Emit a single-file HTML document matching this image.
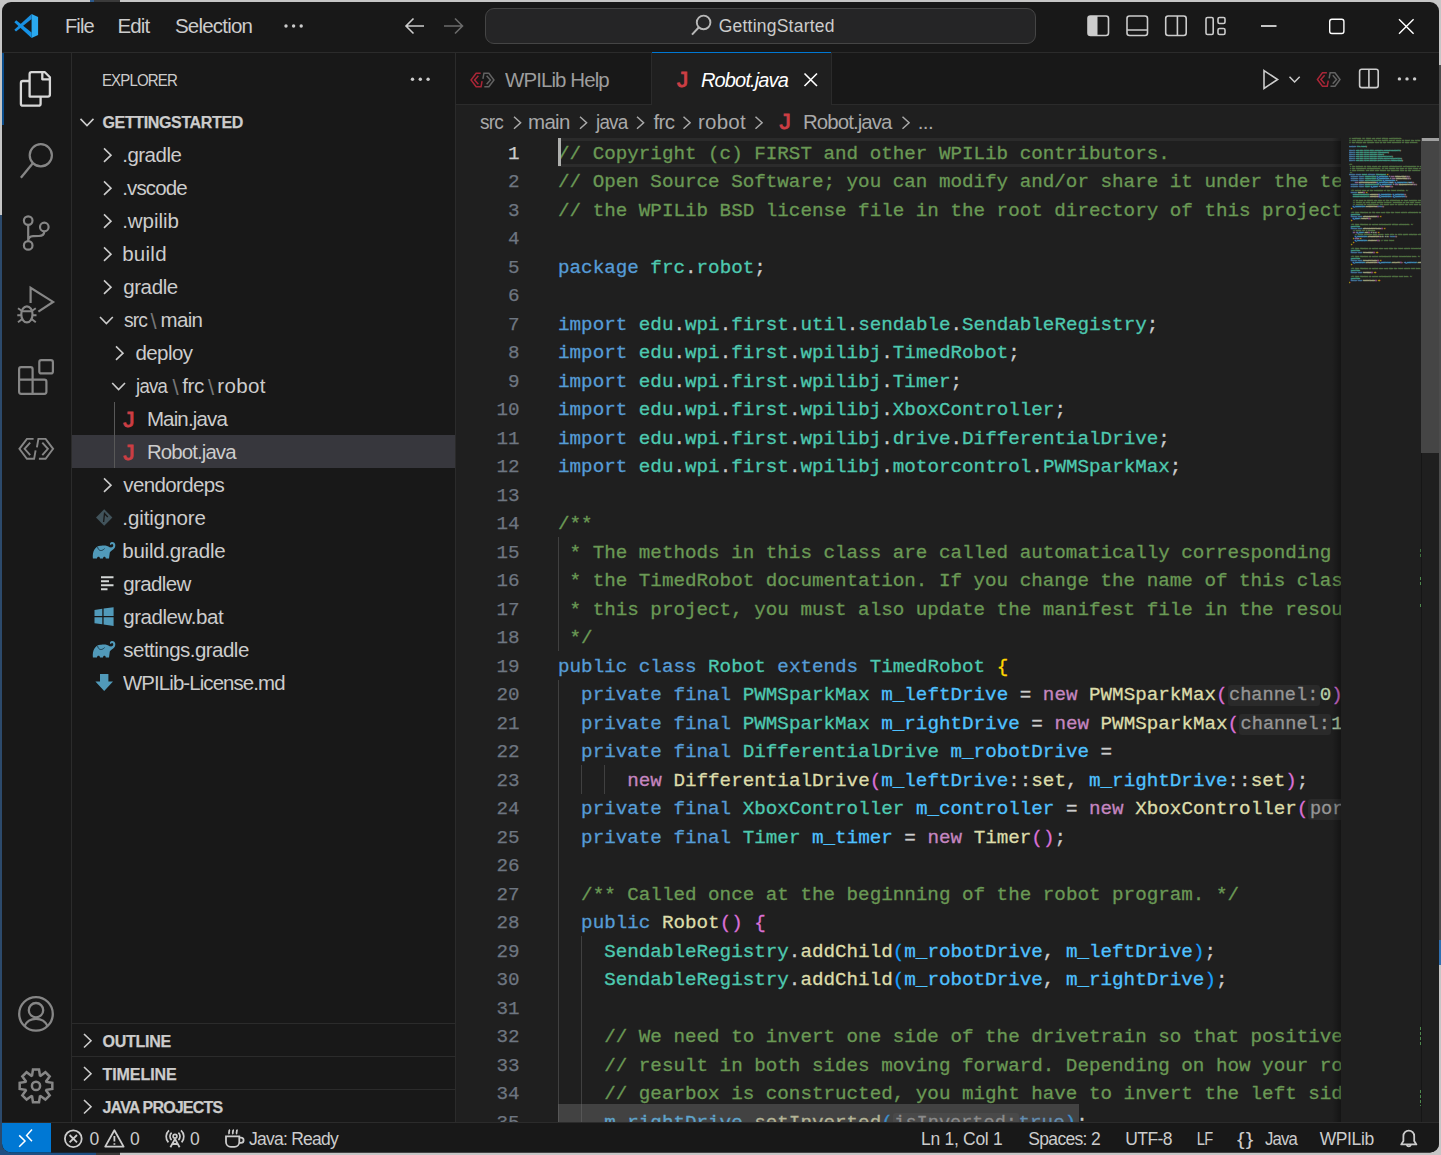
<!DOCTYPE html>
<html><head><meta charset="utf-8"><title>Robot.java - GettingStarted - Visual Studio Code</title>
<style>
html,body{margin:0;padding:0}
body{width:1441px;height:1155px;overflow:hidden;position:relative;background:#c6c6c6;font-family:"Liberation Sans",sans-serif}
#outside{position:absolute;left:0;top:0;width:1441px;height:1155px}
#win{position:absolute;left:0;top:0;width:1441px;height:1155px;background:#181818;clip-path:inset(2px 2px 2.5px 2px round 9px)}
.abs{position:absolute}
.t{position:absolute;white-space:pre}
.cl{position:absolute;left:558px;height:28.5px;line-height:28.5px;white-space:pre;font-family:"Liberation Mono",monospace;font-size:19.24px;color:#cccccc;-webkit-text-stroke:0.3px}
.ln{position:absolute;left:456px;width:63.5px;text-align:right;height:28.5px;line-height:28.5px;font-family:"Liberation Mono",monospace;font-size:19.24px;-webkit-text-stroke:0.25px}
.hint{font-size:18.6px;color:#969696;background:#2a2a2a;padding:0 1.5px;border-radius:3px}
#code{position:absolute;left:0;top:0;width:1341px;height:1122px;overflow:hidden}
svg{position:absolute;left:0;top:0}
#mm{position:absolute;left:0;top:0;width:1400px;transform-origin:0 0;transform:scale(0.0866,0.125);font-family:"Liberation Mono",monospace;font-size:19.24px;font-weight:700;color:#cccccc;opacity:0.7;-webkit-text-stroke:4px}
.ml{height:16px;line-height:16px;white-space:pre}
</style></head>
<body>
<div id="outside"><div class="abs" style="left:0px;top:0px;width:1441px;height:1155px;background:#c6c6c6;"></div><div class="abs" style="left:0px;top:215px;width:4px;height:940px;background:#2c4a6c;"></div><div class="abs" style="left:0px;top:1150px;width:96px;height:5px;background:#1f4f82;"></div><div class="abs" style="left:96px;top:1150px;width:24px;height:5px;background:#3a3a3a;"></div><div class="abs" style="left:90px;top:0px;width:4px;height:4px;background:#2c5a8c;"></div><div class="abs" style="left:94px;top:0px;width:26px;height:4px;background:#3a3a3a;"></div><div class="abs" style="left:1437px;top:65px;width:4px;height:875px;background:#4c4c4c;"></div><div class="abs" style="left:1437px;top:940px;width:4px;height:25px;background:#2f6fb0;"></div></div>
<div id="win">
<div class="abs" style="left:2px;top:52px;width:1437px;height:1px;background:#2b2b2b;"></div><div class="abs" style="left:485px;top:8px;width:549px;height:34px;box-sizing:content-box;border:1px solid #454545;border-radius:9px;background:#252526"></div><div class="abs" style="left:71px;top:53px;width:1px;height:1069px;background:#2b2b2b;"></div><div class="abs" style="left:2px;top:53px;width:1.5px;height:72px;background:#0c4e8c;"></div><div class="abs" style="left:455px;top:53px;width:1px;height:1069px;background:#2b2b2b;"></div><div class="abs" style="left:72px;top:435px;width:383px;height:33px;background:#37373d;"></div><div class="abs" style="left:72px;top:1023px;width:383px;height:1px;background:#2b2b2b;"></div><div class="abs" style="left:72px;top:1056px;width:383px;height:1px;background:#2b2b2b;"></div><div class="abs" style="left:72px;top:1089px;width:383px;height:1px;background:#2b2b2b;"></div><div class="abs" style="left:114px;top:402px;width:1px;height:66px;background:#585858;"></div><div class="abs" style="left:456px;top:53px;width:983px;height:1069px;background:#1f1f1f;"></div><div class="abs" style="left:456px;top:53px;width:983px;height:51px;background:#181818;"></div><div class="abs" style="left:456px;top:104px;width:983px;height:1px;background:#2b2b2b;"></div><div class="abs" style="left:651px;top:53px;width:1px;height:51px;background:#2b2b2b;"></div><div class="abs" style="left:652px;top:53px;width:179px;height:52px;background:#1f1f1f;"></div><div class="abs" style="left:652px;top:52px;width:179px;height:1.2px;background:#0078d4;"></div><div class="abs" style="left:831px;top:53px;width:1px;height:51px;background:#2b2b2b;"></div><div class="abs" style="left:558px;top:138px;width:783px;height:3px;background:#2b2b2b;"></div><div class="abs" style="left:558px;top:163.5px;width:783px;height:3px;background:#2b2b2b;"></div><div class="abs" style="left:2px;top:1122px;width:1437px;height:1px;background:#2b2b2b;"></div><div class="abs" style="left:2px;top:1123px;width:1437px;height:30px;background:#181818;"></div><div class="abs" style="left:2px;top:1123px;width:49px;height:30px;background:#0078d4;"></div>
<div id="code">
<div class="abs" style="left:558px;top:537.0px;width:1.2px;height:114.0px;background:#404040;"></div><div class="abs" style="left:558px;top:679.5px;width:1.2px;height:456.0px;background:#404040;"></div><div class="abs" style="left:581px;top:765.0px;width:1.2px;height:28.5px;background:#404040;"></div><div class="abs" style="left:604px;top:765.0px;width:1.2px;height:28.5px;background:#404040;"></div><div class="abs" style="left:581px;top:936.0px;width:1.2px;height:199.5px;background:#404040;"></div>
<div class="cl" style="top:139.5px"><span style="color:#6A9955">// Copyright (c) FIRST and other WPILib contributors.</span></div>
<div class="ln" style="top:139.5px;color:#cccccc">1</div>
<div class="cl" style="top:168.0px"><span style="color:#6A9955">// Open Source Software; you can modify and/or share it under the terms of</span></div>
<div class="ln" style="top:168.0px;color:#6e7681">2</div>
<div class="cl" style="top:196.5px"><span style="color:#6A9955">// the WPILib BSD license file in the root directory of this project.</span></div>
<div class="ln" style="top:196.5px;color:#6e7681">3</div>
<div class="cl" style="top:225.0px"></div>
<div class="ln" style="top:225.0px;color:#6e7681">4</div>
<div class="cl" style="top:253.5px"><span style="color:#569CD6">package</span> <span style="color:#4EC9B0">frc</span>.<span style="color:#4EC9B0">robot</span>;</div>
<div class="ln" style="top:253.5px;color:#6e7681">5</div>
<div class="cl" style="top:282.0px"></div>
<div class="ln" style="top:282.0px;color:#6e7681">6</div>
<div class="cl" style="top:310.5px"><span style="color:#569CD6">import</span> <span style="color:#4EC9B0">edu</span>.<span style="color:#4EC9B0">wpi</span>.<span style="color:#4EC9B0">first</span>.<span style="color:#4EC9B0">util</span>.<span style="color:#4EC9B0">sendable</span>.<span style="color:#4EC9B0">SendableRegistry</span>;</div>
<div class="ln" style="top:310.5px;color:#6e7681">7</div>
<div class="cl" style="top:339.0px"><span style="color:#569CD6">import</span> <span style="color:#4EC9B0">edu</span>.<span style="color:#4EC9B0">wpi</span>.<span style="color:#4EC9B0">first</span>.<span style="color:#4EC9B0">wpilibj</span>.<span style="color:#4EC9B0">TimedRobot</span>;</div>
<div class="ln" style="top:339.0px;color:#6e7681">8</div>
<div class="cl" style="top:367.5px"><span style="color:#569CD6">import</span> <span style="color:#4EC9B0">edu</span>.<span style="color:#4EC9B0">wpi</span>.<span style="color:#4EC9B0">first</span>.<span style="color:#4EC9B0">wpilibj</span>.<span style="color:#4EC9B0">Timer</span>;</div>
<div class="ln" style="top:367.5px;color:#6e7681">9</div>
<div class="cl" style="top:396.0px"><span style="color:#569CD6">import</span> <span style="color:#4EC9B0">edu</span>.<span style="color:#4EC9B0">wpi</span>.<span style="color:#4EC9B0">first</span>.<span style="color:#4EC9B0">wpilibj</span>.<span style="color:#4EC9B0">XboxController</span>;</div>
<div class="ln" style="top:396.0px;color:#6e7681">10</div>
<div class="cl" style="top:424.5px"><span style="color:#569CD6">import</span> <span style="color:#4EC9B0">edu</span>.<span style="color:#4EC9B0">wpi</span>.<span style="color:#4EC9B0">first</span>.<span style="color:#4EC9B0">wpilibj</span>.<span style="color:#4EC9B0">drive</span>.<span style="color:#4EC9B0">DifferentialDrive</span>;</div>
<div class="ln" style="top:424.5px;color:#6e7681">11</div>
<div class="cl" style="top:453.0px"><span style="color:#569CD6">import</span> <span style="color:#4EC9B0">edu</span>.<span style="color:#4EC9B0">wpi</span>.<span style="color:#4EC9B0">first</span>.<span style="color:#4EC9B0">wpilibj</span>.<span style="color:#4EC9B0">motorcontrol</span>.<span style="color:#4EC9B0">PWMSparkMax</span>;</div>
<div class="ln" style="top:453.0px;color:#6e7681">12</div>
<div class="cl" style="top:481.5px"></div>
<div class="ln" style="top:481.5px;color:#6e7681">13</div>
<div class="cl" style="top:510.0px"><span style="color:#6A9955">/**</span></div>
<div class="ln" style="top:510.0px;color:#6e7681">14</div>
<div class="cl" style="top:538.5px"><span style="color:#6A9955"> * The methods in this class are called automatically corresponding to each mode, as described in</span></div>
<div class="ln" style="top:538.5px;color:#6e7681">15</div>
<div class="cl" style="top:567.0px"><span style="color:#6A9955"> * the TimedRobot documentation. If you change the name of this class or the package after creating</span></div>
<div class="ln" style="top:567.0px;color:#6e7681">16</div>
<div class="cl" style="top:595.5px"><span style="color:#6A9955"> * this project, you must also update the manifest file in the resource directory.</span></div>
<div class="ln" style="top:595.5px;color:#6e7681">17</div>
<div class="cl" style="top:624.0px"><span style="color:#6A9955"> */</span></div>
<div class="ln" style="top:624.0px;color:#6e7681">18</div>
<div class="cl" style="top:652.5px"><span style="color:#569CD6">public</span> <span style="color:#569CD6">class</span> <span style="color:#4EC9B0">Robot</span> <span style="color:#569CD6">extends</span> <span style="color:#4EC9B0">TimedRobot</span> <span style="color:#FFD700">{</span></div>
<div class="ln" style="top:652.5px;color:#6e7681">19</div>
<div class="cl" style="top:681.0px">  <span style="color:#569CD6">private</span> <span style="color:#569CD6">final</span> <span style="color:#4EC9B0">PWMSparkMax</span> <span style="color:#4FC1FF">m_leftDrive</span> = <span style="color:#C586C0">new</span> <span style="color:#DCDCAA">PWMSparkMax</span><span style="color:#DA70D6">(</span><span class="hint">channel:</span><span style="color:#B5CEA8">0</span><span style="color:#DA70D6">)</span>;</div>
<div class="ln" style="top:681.0px;color:#6e7681">20</div>
<div class="cl" style="top:709.5px">  <span style="color:#569CD6">private</span> <span style="color:#569CD6">final</span> <span style="color:#4EC9B0">PWMSparkMax</span> <span style="color:#4FC1FF">m_rightDrive</span> = <span style="color:#C586C0">new</span> <span style="color:#DCDCAA">PWMSparkMax</span><span style="color:#DA70D6">(</span><span class="hint">channel:</span><span style="color:#B5CEA8">1</span><span style="color:#DA70D6">)</span>;</div>
<div class="ln" style="top:709.5px;color:#6e7681">21</div>
<div class="cl" style="top:738.0px">  <span style="color:#569CD6">private</span> <span style="color:#569CD6">final</span> <span style="color:#4EC9B0">DifferentialDrive</span> <span style="color:#4FC1FF">m_robotDrive</span> =</div>
<div class="ln" style="top:738.0px;color:#6e7681">22</div>
<div class="cl" style="top:766.5px">      <span style="color:#C586C0">new</span> <span style="color:#DCDCAA">DifferentialDrive</span><span style="color:#DA70D6">(</span><span style="color:#4FC1FF">m_leftDrive</span>::<span style="color:#DCDCAA">set</span>, <span style="color:#4FC1FF">m_rightDrive</span>::<span style="color:#DCDCAA">set</span><span style="color:#DA70D6">)</span>;</div>
<div class="ln" style="top:766.5px;color:#6e7681">23</div>
<div class="cl" style="top:795.0px">  <span style="color:#569CD6">private</span> <span style="color:#569CD6">final</span> <span style="color:#4EC9B0">XboxController</span> <span style="color:#4FC1FF">m_controller</span> = <span style="color:#C586C0">new</span> <span style="color:#DCDCAA">XboxController</span><span style="color:#DA70D6">(</span><span class="hint">port:</span><span style="color:#B5CEA8">0</span><span style="color:#DA70D6">)</span>;</div>
<div class="ln" style="top:795.0px;color:#6e7681">24</div>
<div class="cl" style="top:823.5px">  <span style="color:#569CD6">private</span> <span style="color:#569CD6">final</span> <span style="color:#4EC9B0">Timer</span> <span style="color:#4FC1FF">m_timer</span> = <span style="color:#C586C0">new</span> <span style="color:#DCDCAA">Timer</span><span style="color:#DA70D6">(</span><span style="color:#DA70D6">)</span>;</div>
<div class="ln" style="top:823.5px;color:#6e7681">25</div>
<div class="cl" style="top:852.0px"></div>
<div class="ln" style="top:852.0px;color:#6e7681">26</div>
<div class="cl" style="top:880.5px">  <span style="color:#6A9955">/** Called once at the beginning of the robot program. */</span></div>
<div class="ln" style="top:880.5px;color:#6e7681">27</div>
<div class="cl" style="top:909.0px">  <span style="color:#569CD6">public</span> <span style="color:#DCDCAA">Robot</span><span style="color:#DA70D6">()</span> <span style="color:#DA70D6">{</span></div>
<div class="ln" style="top:909.0px;color:#6e7681">28</div>
<div class="cl" style="top:937.5px">    <span style="color:#4EC9B0">SendableRegistry</span>.<span style="color:#DCDCAA">addChild</span><span style="color:#179FFF">(</span><span style="color:#4FC1FF">m_robotDrive</span>, <span style="color:#4FC1FF">m_leftDrive</span><span style="color:#179FFF">)</span>;</div>
<div class="ln" style="top:937.5px;color:#6e7681">29</div>
<div class="cl" style="top:966.0px">    <span style="color:#4EC9B0">SendableRegistry</span>.<span style="color:#DCDCAA">addChild</span><span style="color:#179FFF">(</span><span style="color:#4FC1FF">m_robotDrive</span>, <span style="color:#4FC1FF">m_rightDrive</span><span style="color:#179FFF">)</span>;</div>
<div class="ln" style="top:966.0px;color:#6e7681">30</div>
<div class="cl" style="top:994.5px"></div>
<div class="ln" style="top:994.5px;color:#6e7681">31</div>
<div class="cl" style="top:1023.0px">    <span style="color:#6A9955">// We need to invert one side of the drivetrain so that positive voltages</span></div>
<div class="ln" style="top:1023.0px;color:#6e7681">32</div>
<div class="cl" style="top:1051.5px">    <span style="color:#6A9955">// result in both sides moving forward. Depending on how your robot&#x27;s</span></div>
<div class="ln" style="top:1051.5px;color:#6e7681">33</div>
<div class="cl" style="top:1080.0px">    <span style="color:#6A9955">// gearbox is constructed, you might have to invert the left side instead.</span></div>
<div class="ln" style="top:1080.0px;color:#6e7681">34</div>
<div class="cl" style="top:1108.5px">    <span style="color:#4FC1FF">m_rightDrive</span>.<span style="color:#DCDCAA">setInverted</span><span style="color:#179FFF">(</span><span class="hint">isInverted:</span><span style="color:#569CD6">true</span><span style="color:#179FFF">)</span>;</div>
<div class="ln" style="top:1108.5px;color:#6e7681">35</div>
<div class="abs" style="left:558px;top:138px;width:3px;height:28px;background:#aeafad"></div>
<div class="abs" style="left:558px;top:1104px;width:521px;height:18px;background:rgba(121,121,121,0.4)"></div>
</div>
<!-- minimap + scrollbar -->
<div class="abs" style="left:1332px;top:138px;width:9px;height:984px;background:linear-gradient(to right,rgba(0,0,0,0),rgba(0,0,0,0.35))"></div>
<div class="abs" style="left:1341px;top:138px;width:98px;height:984px;background:#1f1f1f"></div>
<div class="abs" style="left:1421px;top:138px;width:1px;height:984px;background:#161616"></div>
<div class="abs" style="left:1421px;top:138px;width:18px;height:315px;background:#454545"></div>
<div class="abs" style="left:1422px;top:138px;width:17px;height:3px;background:#a0a0a0"></div>
<div class="abs" style="left:1420px;top:549px;width:1px;height:8px;background:repeating-linear-gradient(to bottom,#3f6f3f 0 3px,transparent 3px 5px)"></div><div class="abs" style="left:1420px;top:577px;width:1px;height:8px;background:repeating-linear-gradient(to bottom,#4f8a4f 0 3px,transparent 3px 5px)"></div><div class="abs" style="left:1420px;top:604px;width:1px;height:4px;background:repeating-linear-gradient(to bottom,#4f8a4f 0 3px,transparent 3px 5px)"></div><div class="abs" style="left:1420px;top:1027px;width:1px;height:20px;background:repeating-linear-gradient(to bottom,#4f8a4f 0 3px,transparent 3px 5px)"></div><div class="abs" style="left:1420px;top:1090px;width:1px;height:16px;background:repeating-linear-gradient(to bottom,#4f8a4f 0 3px,transparent 3px 5px)"></div>
<div class="abs" style="left:1349px;top:136.8px;width:72px;height:150px;overflow:hidden"><div id="mm">
<div class="ml"><span style="color:#6A9955">// Copyright (c) FIRST and other WPILib contributors.</span></div>
<div class="ml"><span style="color:#6A9955">// Open Source Software; you can modify and/or share it under the terms of</span></div>
<div class="ml"><span style="color:#6A9955">// the WPILib BSD license file in the root directory of this project.</span></div>
<div class="ml"> </div>
<div class="ml"><span style="color:#569CD6">package</span> <span style="color:#4EC9B0">frc</span>.<span style="color:#4EC9B0">robot</span>;</div>
<div class="ml"> </div>
<div class="ml"><span style="color:#569CD6">import</span> <span style="color:#4EC9B0">edu</span>.<span style="color:#4EC9B0">wpi</span>.<span style="color:#4EC9B0">first</span>.<span style="color:#4EC9B0">util</span>.<span style="color:#4EC9B0">sendable</span>.<span style="color:#4EC9B0">SendableRegistry</span>;</div>
<div class="ml"><span style="color:#569CD6">import</span> <span style="color:#4EC9B0">edu</span>.<span style="color:#4EC9B0">wpi</span>.<span style="color:#4EC9B0">first</span>.<span style="color:#4EC9B0">wpilibj</span>.<span style="color:#4EC9B0">TimedRobot</span>;</div>
<div class="ml"><span style="color:#569CD6">import</span> <span style="color:#4EC9B0">edu</span>.<span style="color:#4EC9B0">wpi</span>.<span style="color:#4EC9B0">first</span>.<span style="color:#4EC9B0">wpilibj</span>.<span style="color:#4EC9B0">Timer</span>;</div>
<div class="ml"><span style="color:#569CD6">import</span> <span style="color:#4EC9B0">edu</span>.<span style="color:#4EC9B0">wpi</span>.<span style="color:#4EC9B0">first</span>.<span style="color:#4EC9B0">wpilibj</span>.<span style="color:#4EC9B0">XboxController</span>;</div>
<div class="ml"><span style="color:#569CD6">import</span> <span style="color:#4EC9B0">edu</span>.<span style="color:#4EC9B0">wpi</span>.<span style="color:#4EC9B0">first</span>.<span style="color:#4EC9B0">wpilibj</span>.<span style="color:#4EC9B0">drive</span>.<span style="color:#4EC9B0">DifferentialDrive</span>;</div>
<div class="ml"><span style="color:#569CD6">import</span> <span style="color:#4EC9B0">edu</span>.<span style="color:#4EC9B0">wpi</span>.<span style="color:#4EC9B0">first</span>.<span style="color:#4EC9B0">wpilibj</span>.<span style="color:#4EC9B0">motorcontrol</span>.<span style="color:#4EC9B0">PWMSparkMax</span>;</div>
<div class="ml"> </div>
<div class="ml"><span style="color:#6A9955">/**</span></div>
<div class="ml"> <span style="color:#6A9955">* The methods in this class are called automatically corresponding to each mode, as described in</span></div>
<div class="ml"> <span style="color:#6A9955">* the TimedRobot documentation. If you change the name of this class or the package after creating</span></div>
<div class="ml"> <span style="color:#6A9955">* this project, you must also update the manifest file in the resource directory.</span></div>
<div class="ml"> <span style="color:#6A9955">*/</span></div>
<div class="ml"><span style="color:#569CD6">public</span> <span style="color:#569CD6">class</span> <span style="color:#4EC9B0">Robot</span> <span style="color:#569CD6">extends</span> <span style="color:#4EC9B0">TimedRobot</span> <span style="color:#FFD700">{</span></div>
<div class="ml">  <span style="color:#569CD6">private</span> <span style="color:#569CD6">final</span> <span style="color:#4EC9B0">PWMSparkMax</span> <span style="color:#4FC1FF">m_leftDrive</span> = <span style="color:#C586C0">new</span> <span style="color:#DCDCAA">PWMSparkMax</span><span style="color:#DA70D6">(</span><span style="color:#B5CEA8">0</span><span style="color:#DA70D6">)</span>;</div>
<div class="ml">  <span style="color:#569CD6">private</span> <span style="color:#569CD6">final</span> <span style="color:#4EC9B0">PWMSparkMax</span> <span style="color:#4FC1FF">m_rightDrive</span> = <span style="color:#C586C0">new</span> <span style="color:#DCDCAA">PWMSparkMax</span><span style="color:#DA70D6">(</span><span style="color:#B5CEA8">1</span><span style="color:#DA70D6">)</span>;</div>
<div class="ml">  <span style="color:#569CD6">private</span> <span style="color:#569CD6">final</span> <span style="color:#4EC9B0">DifferentialDrive</span> <span style="color:#4FC1FF">m_robotDrive</span> =</div>
<div class="ml">      <span style="color:#C586C0">new</span> <span style="color:#DCDCAA">DifferentialDrive</span><span style="color:#DA70D6">(</span><span style="color:#4FC1FF">m_leftDrive</span>::<span style="color:#9CDCFE">set</span>, <span style="color:#4FC1FF">m_rightDrive</span>::<span style="color:#9CDCFE">set</span><span style="color:#DA70D6">)</span>;</div>
<div class="ml">  <span style="color:#569CD6">private</span> <span style="color:#569CD6">final</span> <span style="color:#4EC9B0">XboxController</span> <span style="color:#4FC1FF">m_controller</span> = <span style="color:#C586C0">new</span> <span style="color:#DCDCAA">XboxController</span><span style="color:#DA70D6">(</span><span style="color:#B5CEA8">0</span><span style="color:#DA70D6">)</span>;</div>
<div class="ml">  <span style="color:#569CD6">private</span> <span style="color:#569CD6">final</span> <span style="color:#4EC9B0">Timer</span> <span style="color:#4FC1FF">m_timer</span> = <span style="color:#C586C0">new</span> <span style="color:#DCDCAA">Timer</span><span style="color:#DA70D6">(</span><span style="color:#DA70D6">)</span>;</div>
<div class="ml"> </div>
<div class="ml">  <span style="color:#6A9955">/** Called once at the beginning of the robot program. */</span></div>
<div class="ml">  <span style="color:#569CD6">public</span> <span style="color:#DCDCAA">Robot</span><span style="color:#DA70D6">(</span><span style="color:#DA70D6">)</span> <span style="color:#FFD700">{</span></div>
<div class="ml">    <span style="color:#4EC9B0">SendableRegistry</span>.<span style="color:#DCDCAA">addChild</span><span style="color:#DA70D6">(</span><span style="color:#4FC1FF">m_robotDrive</span>, <span style="color:#4FC1FF">m_leftDrive</span><span style="color:#DA70D6">)</span>;</div>
<div class="ml">    <span style="color:#4EC9B0">SendableRegistry</span>.<span style="color:#DCDCAA">addChild</span><span style="color:#DA70D6">(</span><span style="color:#4FC1FF">m_robotDrive</span>, <span style="color:#4FC1FF">m_rightDrive</span><span style="color:#DA70D6">)</span>;</div>
<div class="ml"> </div>
<div class="ml">    <span style="color:#6A9955">// We need to invert one side of the drivetrain so that positive voltages</span></div>
<div class="ml">    <span style="color:#6A9955">// result in both sides moving forward. Depending on how your robot&#x27;s</span></div>
<div class="ml">    <span style="color:#6A9955">// gearbox is constructed, you might have to invert the left side instead.</span></div>
<div class="ml">    <span style="color:#4FC1FF">m_rightDrive</span>.<span style="color:#DCDCAA">setInverted</span><span style="color:#DA70D6">(</span><span style="color:#569CD6">true</span><span style="color:#DA70D6">)</span>;</div>
<div class="ml">  <span style="color:#FFD700">}</span></div>
<div class="ml"> </div>
<div class="ml">  <span style="color:#6A9955">/** This function is run once each time the robot enters autonomous mode. */</span></div>
<div class="ml">  <span style="color:#4EC9B0">@Override</span></div>
<div class="ml">  <span style="color:#569CD6">public</span> <span style="color:#569CD6">void</span> <span style="color:#DCDCAA">autonomousInit</span><span style="color:#DA70D6">(</span><span style="color:#DA70D6">)</span> <span style="color:#FFD700">{</span></div>
<div class="ml">    <span style="color:#4FC1FF">m_timer</span>.<span style="color:#DCDCAA">restart</span><span style="color:#DA70D6">(</span><span style="color:#DA70D6">)</span>;</div>
<div class="ml">  <span style="color:#FFD700">}</span></div>
<div class="ml"> </div>
<div class="ml">  <span style="color:#6A9955">/** This function is called periodically during autonomous. */</span></div>
<div class="ml">  <span style="color:#4EC9B0">@Override</span></div>
<div class="ml">  <span style="color:#569CD6">public</span> <span style="color:#569CD6">void</span> <span style="color:#DCDCAA">autonomousPeriodic</span><span style="color:#DA70D6">(</span><span style="color:#DA70D6">)</span> <span style="color:#FFD700">{</span></div>
<div class="ml">    <span style="color:#6A9955">// Drive for 2 seconds</span></div>
<div class="ml">    <span style="color:#C586C0">if</span> <span style="color:#DA70D6">(</span><span style="color:#4FC1FF">m_timer</span>.<span style="color:#DCDCAA">get</span><span style="color:#DA70D6">(</span><span style="color:#DA70D6">)</span> &lt; <span style="color:#B5CEA8">2.0</span><span style="color:#DA70D6">)</span> <span style="color:#FFD700">{</span></div>
<div class="ml">      <span style="color:#6A9955">// Drive forwards half speed, make sure to turn input squaring off</span></div>
<div class="ml">      <span style="color:#4FC1FF">m_robotDrive</span>.<span style="color:#DCDCAA">arcadeDrive</span><span style="color:#DA70D6">(</span><span style="color:#B5CEA8">0.5</span>, <span style="color:#B5CEA8">0.0</span>, <span style="color:#569CD6">false</span><span style="color:#DA70D6">)</span>;</div>
<div class="ml">    <span style="color:#FFD700">}</span> <span style="color:#C586C0">else</span> <span style="color:#FFD700">{</span></div>
<div class="ml">      <span style="color:#4FC1FF">m_robotDrive</span>.<span style="color:#DCDCAA">stopMotor</span><span style="color:#DA70D6">(</span><span style="color:#DA70D6">)</span>; <span style="color:#6A9955">// stop robot</span></div>
<div class="ml">    <span style="color:#FFD700">}</span></div>
<div class="ml">  <span style="color:#FFD700">}</span></div>
<div class="ml"> </div>
<div class="ml">  <span style="color:#6A9955">/** This function is called once each time the robot enters teleoperated mode. */</span></div>
<div class="ml">  <span style="color:#4EC9B0">@Override</span></div>
<div class="ml">  <span style="color:#569CD6">public</span> <span style="color:#569CD6">void</span> <span style="color:#DCDCAA">teleopInit</span><span style="color:#DA70D6">(</span><span style="color:#DA70D6">)</span> <span style="color:#FFD700">{</span><span style="color:#FFD700">}</span></div>
<div class="ml"> </div>
<div class="ml">  <span style="color:#6A9955">/** This function is called periodically during teleoperated mode. */</span></div>
<div class="ml">  <span style="color:#4EC9B0">@Override</span></div>
<div class="ml">  <span style="color:#569CD6">public</span> <span style="color:#569CD6">void</span> <span style="color:#DCDCAA">teleopPeriodic</span><span style="color:#DA70D6">(</span><span style="color:#DA70D6">)</span> <span style="color:#FFD700">{</span></div>
<div class="ml">    <span style="color:#4FC1FF">m_robotDrive</span>.<span style="color:#DCDCAA">arcadeDrive</span><span style="color:#DA70D6">(</span>-<span style="color:#4FC1FF">m_controller</span>.<span style="color:#DCDCAA">getLeftY</span><span style="color:#DA70D6">(</span><span style="color:#DA70D6">)</span>, -<span style="color:#4FC1FF">m_controller</span>.<span style="color:#DCDCAA">getRightX</span><span style="color:#DA70D6">(</span><span style="color:#DA70D6">)</span><span style="color:#DA70D6">)</span>;</div>
<div class="ml">  <span style="color:#FFD700">}</span></div>
<div class="ml"> </div>
<div class="ml">  <span style="color:#6A9955">/** This function is called once each time the robot enters test mode. */</span></div>
<div class="ml">  <span style="color:#4EC9B0">@Override</span></div>
<div class="ml">  <span style="color:#569CD6">public</span> <span style="color:#569CD6">void</span> <span style="color:#DCDCAA">testInit</span><span style="color:#DA70D6">(</span><span style="color:#DA70D6">)</span> <span style="color:#FFD700">{</span><span style="color:#FFD700">}</span></div>
<div class="ml"> </div>
<div class="ml">  <span style="color:#6A9955">/** This function is called periodically during test mode. */</span></div>
<div class="ml">  <span style="color:#4EC9B0">@Override</span></div>
<div class="ml">  <span style="color:#569CD6">public</span> <span style="color:#569CD6">void</span> <span style="color:#DCDCAA">testPeriodic</span><span style="color:#DA70D6">(</span><span style="color:#DA70D6">)</span> <span style="color:#FFD700">{</span><span style="color:#FFD700">}</span></div>
<div class="ml"><span style="color:#FFD700">}</span></div>
</div></div>
<span class="t" style="left:64.50px;top:12.77px;font-size:20.5px;line-height:26.65px;color:#cccccc;letter-spacing:-0.900px;transform:scaleX(0.9782);transform-origin:-1.00px 50%;">File</span>
<span class="t" style="left:117.50px;top:12.77px;font-size:20.5px;line-height:26.65px;color:#cccccc;letter-spacing:-0.876px;">Edit</span>
<span class="t" style="left:175.00px;top:12.77px;font-size:20.5px;line-height:26.65px;color:#cccccc;letter-spacing:-0.804px;">Selection</span>
<span class="t" style="left:718.75px;top:14.56px;font-size:17.5px;line-height:22.75px;color:#cccccc;letter-spacing:0.222px;">GettingStarted</span>
<span class="t" style="left:101.50px;top:70.81px;font-size:16px;line-height:20.8px;color:#cccccc;letter-spacing:-0.900px;transform:scaleX(0.9396);transform-origin:-1.00px 50%;">EXPLORER</span>
<span class="t" style="left:102.50px;top:113.06px;font-size:16px;line-height:20.8px;color:#cccccc;letter-spacing:-0.363px;font-weight:700;-webkit-text-stroke:0.25px;">GETTINGSTARTED</span>
<span class="t" style="left:122.20px;top:141.57px;font-size:20.5px;line-height:26.65px;color:#cccccc;letter-spacing:-0.497px;">.gradle</span>
<span class="t" style="left:122.20px;top:174.57px;font-size:20.5px;line-height:26.65px;color:#cccccc;letter-spacing:-0.875px;">.vscode</span>
<span class="t" style="left:122.20px;top:207.57px;font-size:20.5px;line-height:26.65px;color:#cccccc;letter-spacing:-0.061px;">.wpilib</span>
<span class="t" style="left:122.20px;top:240.57px;font-size:20.5px;line-height:26.65px;color:#cccccc;letter-spacing:0.272px;">build</span>
<span class="t" style="left:123.20px;top:273.57px;font-size:20.5px;line-height:26.65px;color:#cccccc;letter-spacing:-0.397px;">gradle</span>
<span class="t" style="left:135.40px;top:339.57px;font-size:20.5px;line-height:26.65px;color:#cccccc;letter-spacing:-0.552px;">deploy</span>
<span class="t" style="left:146.90px;top:405.57px;font-size:20.5px;line-height:26.65px;color:#cccccc;letter-spacing:-0.854px;">Main.java</span>
<span class="t" style="left:146.90px;top:438.57px;font-size:20.5px;line-height:26.65px;color:#cccccc;letter-spacing:-0.900px;transform:scaleX(0.9955);transform-origin:-1.00px 50%;">Robot.java</span>
<span class="t" style="left:123.30px;top:471.57px;font-size:20.5px;line-height:26.65px;color:#cccccc;letter-spacing:-0.632px;">vendordeps</span>
<span class="t" style="left:122.30px;top:504.57px;font-size:20.5px;line-height:26.65px;color:#cccccc;letter-spacing:-0.070px;">.gitignore</span>
<span class="t" style="left:122.30px;top:537.57px;font-size:20.5px;line-height:26.65px;color:#cccccc;letter-spacing:-0.245px;">build.gradle</span>
<span class="t" style="left:123.30px;top:570.57px;font-size:20.5px;line-height:26.65px;color:#cccccc;letter-spacing:-0.631px;">gradlew</span>
<span class="t" style="left:123.30px;top:603.57px;font-size:20.5px;line-height:26.65px;color:#cccccc;letter-spacing:-0.456px;">gradlew.bat</span>
<span class="t" style="left:123.30px;top:636.57px;font-size:20.5px;line-height:26.65px;color:#cccccc;letter-spacing:-0.523px;">settings.gradle</span>
<span class="t" style="left:123.30px;top:669.57px;font-size:20.5px;line-height:26.65px;color:#cccccc;letter-spacing:-0.900px;transform:scaleX(0.9949);transform-origin:0.00px 50%;">WPILib-License.md</span>
<span class="t" style="left:123.50px;top:306.57px;font-size:20.5px;line-height:26.65px;color:#cccccc;letter-spacing:-0.900px;transform:scaleX(0.9396);transform-origin:0.00px 50%;">src</span>
<span class="t" style="left:150.60px;top:307.58px;font-size:22px;line-height:28.6px;color:#767676;">\</span>
<span class="t" style="left:160.60px;top:306.57px;font-size:20.5px;line-height:26.65px;color:#cccccc;letter-spacing:-0.711px;">main</span>
<span class="t" style="left:136.40px;top:372.57px;font-size:20.5px;line-height:26.65px;color:#cccccc;letter-spacing:-0.900px;transform:scaleX(0.9067);transform-origin:1.00px 50%;">java</span>
<span class="t" style="left:172.50px;top:373.58px;font-size:22px;line-height:28.6px;color:#767676;">\</span>
<span class="t" style="left:182.25px;top:372.57px;font-size:20.5px;line-height:26.65px;color:#cccccc;letter-spacing:-0.336px;">frc</span>
<span class="t" style="left:207.90px;top:373.58px;font-size:22px;line-height:28.6px;color:#767676;">\</span>
<span class="t" style="left:217.25px;top:372.57px;font-size:20.5px;line-height:26.65px;color:#cccccc;letter-spacing:0.367px;">robot</span>
<span class="t" style="left:102.50px;top:1031.81px;font-size:16px;line-height:20.8px;color:#cccccc;letter-spacing:-0.258px;font-weight:700;-webkit-text-stroke:0.25px;">OUTLINE</span>
<span class="t" style="left:102.50px;top:1064.56px;font-size:16px;line-height:20.8px;color:#cccccc;letter-spacing:-0.070px;font-weight:700;-webkit-text-stroke:0.25px;">TIMELINE</span>
<span class="t" style="left:102.50px;top:1097.56px;font-size:16px;line-height:20.8px;color:#cccccc;letter-spacing:-0.818px;font-weight:700;-webkit-text-stroke:0.25px;">JAVA PROJECTS</span>
<span class="t" style="left:504.75px;top:67.17px;font-size:20.5px;line-height:26.65px;color:#9d9d9d;letter-spacing:-0.900px;transform:scaleX(0.9973);transform-origin:0.00px 50%;">WPILib Help</span>
<span class="t" style="left:701.00px;top:67.17px;font-size:20.5px;line-height:26.65px;color:#ffffff;letter-spacing:-0.900px;transform:scaleX(0.9776);transform-origin:0.00px 50%;font-style:italic;">Robot.java</span>
<span class="t" style="left:480.00px;top:108.82px;font-size:20.5px;line-height:26.65px;color:#a9a9a9;letter-spacing:-0.900px;transform:scaleX(0.9297);transform-origin:0.00px 50%;">src</span>
<span class="t" style="left:528.00px;top:108.82px;font-size:20.5px;line-height:26.65px;color:#a9a9a9;letter-spacing:-0.677px;">main</span>
<span class="t" style="left:596.00px;top:108.82px;font-size:20.5px;line-height:26.65px;color:#a9a9a9;letter-spacing:-0.900px;transform:scaleX(0.9177);transform-origin:1.00px 50%;">java</span>
<span class="t" style="left:653.50px;top:108.82px;font-size:20.5px;line-height:26.65px;color:#a9a9a9;letter-spacing:-0.636px;">frc</span>
<span class="t" style="left:698.00px;top:108.82px;font-size:20.5px;line-height:26.65px;color:#a9a9a9;letter-spacing:0.242px;">robot</span>
<span class="t" style="left:803.00px;top:108.82px;font-size:20.5px;line-height:26.65px;color:#a9a9a9;letter-spacing:-0.900px;transform:scaleX(0.9944);transform-origin:-1.00px 50%;">Robot.java</span>
<span class="t" style="left:917.75px;top:108.82px;font-size:20.5px;line-height:26.65px;color:#a9a9a9;letter-spacing:-0.571px;">...</span>
<span class="t" style="left:123.30px;top:404.58px;font-size:22.5px;line-height:29.25px;color:#cc3e44;-webkit-text-stroke:0.9px;">J</span>
<span class="t" style="left:123.30px;top:437.58px;font-size:22.5px;line-height:29.25px;color:#cc3e44;-webkit-text-stroke:0.9px;">J</span>
<span class="t" style="left:676.90px;top:64.88px;font-size:22.5px;line-height:29.25px;color:#cc3e44;-webkit-text-stroke:0.9px;">J</span>
<span class="t" style="left:779.50px;top:107.48px;font-size:22.5px;line-height:29.25px;color:#cc3e44;-webkit-text-stroke:0.9px;">J</span>
<span class="t" style="left:89.50px;top:1127.56px;font-size:17.5px;line-height:22.75px;color:#cccccc;">0</span>
<span class="t" style="left:130.00px;top:1127.56px;font-size:17.5px;line-height:22.75px;color:#cccccc;">0</span>
<span class="t" style="left:190.00px;top:1127.56px;font-size:17.5px;line-height:22.75px;color:#cccccc;">0</span>
<span class="t" style="left:249.00px;top:1127.56px;font-size:17.5px;line-height:22.75px;color:#cccccc;letter-spacing:-0.753px;">Java: Ready</span>
<span class="t" style="left:921.00px;top:1127.56px;font-size:17.5px;line-height:22.75px;color:#cccccc;letter-spacing:-0.290px;">Ln 1, Col 1</span>
<span class="t" style="left:1028.25px;top:1127.56px;font-size:17.5px;line-height:22.75px;color:#cccccc;letter-spacing:-0.668px;">Spaces: 2</span>
<span class="t" style="left:1125.25px;top:1127.56px;font-size:17.5px;line-height:22.75px;color:#cccccc;letter-spacing:-0.586px;">UTF-8</span>
<span class="t" style="left:1197.00px;top:1127.56px;font-size:17.5px;line-height:22.75px;color:#cccccc;letter-spacing:-0.900px;transform:scaleX(0.8412);transform-origin:-1.00px 50%;">LF</span>
<span class="t" style="left:1237.00px;top:1127.56px;font-size:17.5px;line-height:22.75px;color:#cccccc;letter-spacing:0.900px;transform:scaleX(1.2947);transform-origin:0.00px 50%;">{}</span>
<span class="t" style="left:1264.50px;top:1127.56px;font-size:17.5px;line-height:22.75px;color:#cccccc;letter-spacing:-0.900px;transform:scaleX(0.9556);transform-origin:0.00px 50%;">Java</span>
<span class="t" style="left:1319.70px;top:1127.56px;font-size:17.5px;line-height:22.75px;color:#cccccc;letter-spacing:-0.394px;">WPILib</span>
<svg width="1441" height="1155" viewBox="0 0 1441 1155">
<polygon points="31.6,13.9 38.1,17 38.1,35 31.6,38.1" fill="#2aa9ef"/>
<polygon points="14.3,29.8 16.0,31.6 31.6,19.0 31.6,13.9" fill="#1a8fe0"/>
<polygon points="14.3,22.3 16.2,20.3 31.6,32.4 31.6,38.1" fill="#1592e6"/>
<circle cx="286" cy="26" r="1.7" fill="#cccccc"/><circle cx="293.6" cy="26" r="1.7" fill="#cccccc"/><circle cx="301.2" cy="26" r="1.7" fill="#cccccc"/>
<path d="M406 26 H424 M413.5 18.5 L406 26 L413.5 33.5" stroke="#cccccc" stroke-width="1.6" fill="none" />
<path d="M444 26 H462.5 M455 18.5 L462.5 26 L455 33.5" stroke="#6b6b6b" stroke-width="1.6" fill="none" />
<circle cx="703.6" cy="22.4" r="6.8" stroke="#b8b8b8" stroke-width="1.9" fill="none"/>
<path d="M698.9 27.3 L692 34.6" stroke="#b8b8b8" stroke-width="2.0" fill="none" />
<rect x="1088" y="16" width="20.5" height="19.5" rx="2.5" stroke="#cccccc" stroke-width="1.6" fill="none"/>
<path d="M1090.5 16 H1097.5 V35.5 H1090.5 A2.5 2.5 0 0 1 1088 33 V18.5 A2.5 2.5 0 0 1 1090.5 16Z" fill="#cccccc"/>
<rect x="1127" y="16" width="20.5" height="19.5" rx="2.5" stroke="#cccccc" stroke-width="1.6" fill="none"/>
<path d="M1127 30 H1147.5" stroke="#cccccc" stroke-width="1.6" fill="none" />
<rect x="1165.7" y="16" width="20.5" height="19.5" rx="2.5" stroke="#cccccc" stroke-width="1.6" fill="none"/>
<path d="M1177.4 16 V35.5" stroke="#cccccc" stroke-width="1.6" fill="none" />
<rect x="1206" y="17.5" width="7.2" height="17" rx="1.5" stroke="#cccccc" stroke-width="1.6" fill="none"/>
<rect x="1218" y="17.5" width="7" height="6" rx="1.5" stroke="#cccccc" stroke-width="1.6" fill="none"/>
<rect x="1218" y="28.5" width="7" height="6" rx="1.5" stroke="#cccccc" stroke-width="1.6" fill="none"/>
<path d="M1261 26 H1276.5" stroke="#ffffff" stroke-width="1.4" fill="none" />
<rect x="1329.7" y="19.3" width="14.2" height="14.2" rx="2.2" stroke="#ffffff" stroke-width="1.4" fill="none"/>
<path d="M1399 19.2 L1413.6 33.8 M1413.6 19.2 L1399 33.8" stroke="#ffffff" stroke-width="1.4" fill="none" />
<path d="M29.6 96.6 V74.2 A2 2 0 0 1 31.6 72.2 H44.9 L49.9 77.2 V94.6 A2 2 0 0 1 47.9 96.6 Z M42.3 72.2 V79.3 H49.9" stroke="#d7d7d7" stroke-width="2.3" fill="none" stroke-linejoin="round"/>
<path d="M29.6 81 H22.9 A2 2 0 0 0 20.9 83 V103.7 A2 2 0 0 0 22.9 105.7 H38.6 A2 2 0 0 0 40.6 103.7 V96.6" stroke="#d7d7d7" stroke-width="2.3" fill="none" />
<circle cx="40.8" cy="155.3" r="11.1" stroke="#868686" stroke-width="2.2" fill="none"/>
<path d="M32.6 163.6 L20.9 177.8" stroke="#868686" stroke-width="2.3" fill="none" />
<circle cx="28.2" cy="220.6" r="4.3" stroke="#868686" stroke-width="2.2" fill="none"/>
<circle cx="28.2" cy="245.4" r="4.3" stroke="#868686" stroke-width="2.2" fill="none"/>
<circle cx="44.3" cy="227" r="4.3" stroke="#868686" stroke-width="2.2" fill="none"/>
<path d="M28.2 225 V241 M28.2 240.5 C28.4 237.5 30 236.2 33 236.1 L39 236 C42.5 236 44.2 234.5 44.3 231.4" stroke="#868686" stroke-width="2.2" fill="none" />
<path d="M30.6 303 V287.8 L53.1 301.9 L38.4 311.6" stroke="#868686" stroke-width="2.2" fill="none" stroke-linejoin="miter"/>
<ellipse cx="26.9" cy="314.4" rx="5.6" ry="8" stroke="#868686" stroke-width="2.2" fill="none"/>
<path d="M21.5 311.2 H32.3 M18 308.2 L22 311 M35.8 308.2 L31.8 311 M17.3 315.2 H21.3 M36.5 315.2 H32.5 M18 322.2 L22.2 319 M35.8 322.2 L31.6 319" stroke="#868686" stroke-width="2.0" fill="none" />
<path d="M19.1 369.2 A2 2 0 0 1 21.1 367.2 H30.6 A2 2 0 0 1 32.6 369.2 V379.7 H44.4 A2 2 0 0 1 46.4 381.7 V391.8 A2 2 0 0 1 44.4 393.8 H21.1 A2 2 0 0 1 19.1 391.8 Z M19.1 379.7 H32.6 V393.8" stroke="#868686" stroke-width="2.2" fill="none" />
<rect x="39.3" y="360.2" width="13.6" height="13.2" rx="2" stroke="#868686" stroke-width="2.2" fill="none"/>
<path d="M33.60 438.90 L26.90 438.90 L19.40 448.85 L26.90 458.80 L34.10 458.80 L35.60 450.40" stroke="#868686" stroke-width="1.9" fill="none" /><path d="M30.20 442.60 L24.60 448.85 L30.20 455.20" stroke="#868686" stroke-width="1.9" fill="none" /><path d="M38.90 458.80 L45.60 458.80 L53.10 448.85 L45.60 438.90 L38.40 438.90 L36.90 447.30" stroke="#868686" stroke-width="1.9" fill="none" /><path d="M42.30 442.60 L47.90 448.85 L42.30 455.20" stroke="#868686" stroke-width="1.9" fill="none" />
<circle cx="36" cy="1013.9" r="16.8" stroke="#868686" stroke-width="2.3" fill="none"/>
<circle cx="36" cy="1010.2" r="7.2" stroke="#868686" stroke-width="2.3" fill="none"/>
<path d="M24.6 1026 C27 1020.5 31 1018.9 36 1018.9 C41 1018.9 45 1020.5 47.4 1026" stroke="#868686" stroke-width="2.3" fill="none" />
<path d="M32.08 1075.41 L32.97 1069.58 L39.03 1069.58 L39.92 1075.41 L40.64 1075.71 L45.40 1072.22 L49.68 1076.50 L46.19 1081.26 L46.49 1081.98 L52.32 1082.87 L52.32 1088.93 L46.49 1089.82 L46.19 1090.54 L49.68 1095.30 L45.40 1099.58 L40.64 1096.09 L39.92 1096.39 L39.03 1102.22 L32.97 1102.22 L32.08 1096.39 L31.36 1096.09 L26.60 1099.58 L22.32 1095.30 L25.81 1090.54 L25.51 1089.82 L19.68 1088.93 L19.68 1082.87 L25.51 1081.98 L25.81 1081.26 L22.32 1076.50 L26.60 1072.22 L31.36 1075.71 Z" stroke="#868686" stroke-width="2.5" fill="none" stroke-linejoin="miter"/><circle cx="36" cy="1085.9" r="4.1" stroke="#868686" stroke-width="2.5" fill="none"/>
<circle cx="412.5" cy="79.3" r="1.7" fill="#cccccc"/><circle cx="420.3" cy="79.3" r="1.7" fill="#cccccc"/><circle cx="428.1" cy="79.3" r="1.7" fill="#cccccc"/>
<path d="M80.5 118.9 L87.0 125.5 L93.5 118.9" stroke="#cccccc" stroke-width="1.6" fill="none" />
<path d="M104 148.45 L111 155.2 L104 161.95" stroke="#cccccc" stroke-width="1.6" fill="none" stroke-linejoin="miter"/>
<path d="M104 181.45 L111 188.2 L104 194.95" stroke="#cccccc" stroke-width="1.6" fill="none" stroke-linejoin="miter"/>
<path d="M104 214.45 L111 221.2 L104 227.95" stroke="#cccccc" stroke-width="1.6" fill="none" stroke-linejoin="miter"/>
<path d="M104 247.45 L111 254.2 L104 260.95" stroke="#cccccc" stroke-width="1.6" fill="none" stroke-linejoin="miter"/>
<path d="M104 280.45 L111 287.2 L104 293.95" stroke="#cccccc" stroke-width="1.6" fill="none" stroke-linejoin="miter"/>
<path d="M104 478.45 L111 485.2 L104 491.95" stroke="#cccccc" stroke-width="1.6" fill="none" stroke-linejoin="miter"/>
<path d="M100 317.0 L106.4 323.6 L112.8 317.0" stroke="#cccccc" stroke-width="1.6" fill="none" />
<path d="M116 346.45 L123 353.2 L116 359.95" stroke="#cccccc" stroke-width="1.6" fill="none" stroke-linejoin="miter"/>
<path d="M112.2 383.0 L118.60000000000001 389.6 L125.0 383.0" stroke="#cccccc" stroke-width="1.6" fill="none" />
<path d="M84 1034.0 L91 1040.75 L84 1047.5" stroke="#cccccc" stroke-width="1.6" fill="none" stroke-linejoin="miter"/>
<path d="M84 1067.0 L91 1073.75 L84 1080.5" stroke="#cccccc" stroke-width="1.6" fill="none" stroke-linejoin="miter"/>
<path d="M84 1100.0 L91 1106.75 L84 1113.5" stroke="#cccccc" stroke-width="1.6" fill="none" stroke-linejoin="miter"/>
<polygon points="104.2,509.3 112.4,517.5 104.2,525.7 96,517.5" fill="#41535b"/>
<path d="M104.6 512.5 L103.6 522.0 M104.4 513.5 L107.8 517.0" stroke="#181818" stroke-width="1.3" fill="none" />
<path d="M92.9 558.4 C92.1 551.1 95.6 545.3 101.1 545.7 C104.6 545.1 107.6 545.6 109.6 547.3 C112.1 547.9 113.6 546.7 113.2 544.9 C112.8 543.5 111.0 543.7 111.2 545.1 C109.6 545.1 109.2 542.5 111.9 542.1 C115.2 541.9 116.2 545.5 114.6 548.1 C113.2 550.3 111.0 550.7 109.8 552.5 L109.0 558.4 L105.8 558.4 C105.8 556.3 103.0 556.3 103.0 558.4 L100.0 558.4 C100.0 556.3 97.0 556.3 97.0 558.4 Z" fill="#519aba"/><path d="M97.6 547.1 C98.6 551.1 101.6 551.6 104.6 548.6" stroke="#1b3a4a" stroke-width="1.0" fill="none" />
<path d="M92.9 657.4 C92.1 650.1 95.6 644.3 101.1 644.7 C104.6 644.1 107.6 644.6 109.6 646.3 C112.1 646.9 113.6 645.7 113.2 643.9 C112.8 642.5 111.0 642.7 111.2 644.1 C109.6 644.1 109.2 641.5 111.9 641.1 C115.2 640.9 116.2 644.5 114.6 647.1 C113.2 649.3 111.0 649.7 109.8 651.5 L109.0 657.4 L105.8 657.4 C105.8 655.3 103.0 655.3 103.0 657.4 L100.0 657.4 C100.0 655.3 97.0 655.3 97.0 657.4 Z" fill="#519aba"/><path d="M97.6 646.1 C98.6 650.1 101.6 650.6 104.6 647.6" stroke="#1b3a4a" stroke-width="1.0" fill="none" />
<path d="M101 577.3 H113.5 M101 581.3 H109 M101 585.3 H113.5 M101 589.3 H107.5" stroke="#d4d7d6" stroke-width="2" fill="none" />
<path d="M94.5 609.9 L102.3 608.8 V615.9 H94.5Z M103.6 608.6 L113.6 607.2 V615.9 H103.6Z M94.5 617.2 H102.3 V624.3 L94.5 623.2Z M103.6 617.2 H113.6 V625.9 L103.6 624.5Z" fill="#519aba"/>
<path d="M100 674.0 H108.4 V681.5 H113 L104.2 691.0 L95.4 681.5 H100 Z" fill="#519aba"/>
<path d="M480.70 73.23 L476.14 73.23 L471.04 80.00 L476.14 86.77 L481.04 86.77 L482.06 81.05" stroke="#a92637" stroke-width="1.5" fill="none" /><path d="M478.39 75.75 L474.58 80.00 L478.39 84.32" stroke="#a92637" stroke-width="1.5" fill="none" /><path d="M484.30 86.77 L488.86 86.77 L493.96 80.00 L488.86 73.23 L483.96 73.23 L482.94 78.95" stroke="#626262" stroke-width="1.5" fill="none" /><path d="M486.61 75.75 L490.42 80.00 L486.61 84.32" stroke="#626262" stroke-width="1.5" fill="none" />
<path d="M804.5 73.5 L817 86 M817 73.5 L804.5 86" stroke="#ffffff" stroke-width="1.6" fill="none" />
<path d="M514 116.8 L520.6 122.8 L514 128.8" stroke="#a9a9a9" stroke-width="1.5" fill="none" />
<path d="M580 116.8 L586.6 122.8 L580 128.8" stroke="#a9a9a9" stroke-width="1.5" fill="none" />
<path d="M637 116.8 L643.6 122.8 L637 128.8" stroke="#a9a9a9" stroke-width="1.5" fill="none" />
<path d="M683.5 116.8 L690.1 122.8 L683.5 128.8" stroke="#a9a9a9" stroke-width="1.5" fill="none" />
<path d="M755.5 116.8 L762.1 122.8 L755.5 128.8" stroke="#a9a9a9" stroke-width="1.5" fill="none" />
<path d="M902.5 116.8 L909.1 122.8 L902.5 128.8" stroke="#a9a9a9" stroke-width="1.5" fill="none" />
<path d="M1264 70.6 L1277.6 79.5 L1264 88.4 Z" stroke="#cccccc" stroke-width="1.6" fill="none" stroke-linejoin="miter"/>
<path d="M1289.5 76.8 L1294.6 82 L1299.7 76.8" stroke="#cccccc" stroke-width="1.5" fill="none" />
<path d="M1326.92 72.83 L1322.44 72.83 L1317.41 79.50 L1322.44 86.17 L1327.26 86.17 L1328.26 80.54" stroke="#a92637" stroke-width="1.5" fill="none" /><path d="M1324.65 75.31 L1320.89 79.50 L1324.65 83.75" stroke="#a92637" stroke-width="1.5" fill="none" /><path d="M1330.48 86.17 L1334.96 86.17 L1339.99 79.50 L1334.96 72.83 L1330.14 72.83 L1329.14 78.46" stroke="#626262" stroke-width="1.5" fill="none" /><path d="M1332.75 75.31 L1336.51 79.50 L1332.75 83.75" stroke="#626262" stroke-width="1.5" fill="none" />
<rect x="1359.6" y="69.2" width="18.6" height="18.4" rx="2.2" stroke="#cccccc" stroke-width="1.6" fill="none"/>
<path d="M1368.9 69.2 V87.6" stroke="#cccccc" stroke-width="1.6" fill="none" />
<circle cx="1399.4" cy="78.9" r="1.7" fill="#cccccc"/><circle cx="1407" cy="78.9" r="1.7" fill="#cccccc"/><circle cx="1414.6" cy="78.9" r="1.7" fill="#cccccc"/>
<path d="M19.2 1135.4 L25 1141 L19.2 1146.7 M32 1129.6 L26.6 1135.4 L32 1141.2" stroke="#ffffff" stroke-width="1.5" fill="none" />
<circle cx="73.3" cy="1138.7" r="8.4" stroke="#cccccc" stroke-width="1.8" fill="none"/>
<path d="M69.6 1135 L77 1142.4 M77 1135 L69.6 1142.4" stroke="#cccccc" stroke-width="1.8" fill="none" />
<path d="M114.4 1130.3 L123.6 1146.6 H105.2 Z" stroke="#cccccc" stroke-width="1.8" fill="none" stroke-linejoin="round"/>
<path d="M114.4 1136 V1141.6 M114.4 1143.2 V1144.8" stroke="#cccccc" stroke-width="1.8" fill="none" />
<path d="M175 1139 L170.4 1147.3 M175 1139 L179.6 1147.3 M172.2 1144 H177.8" stroke="#cccccc" stroke-width="1.8" fill="none" />
<circle cx="175" cy="1136.3" r="1.9" stroke="#cccccc" stroke-width="1.7" fill="none"/>
<path d="M171.6 1132.6 A5 5 0 0 0 171.6 1140 M178.4 1132.6 A5 5 0 0 1 178.4 1140 M169 1130.3 A8.4 8.4 0 0 0 168.4 1142.3 M181 1130.3 A8.4 8.4 0 0 1 181.6 1142.3" stroke="#cccccc" stroke-width="1.7" fill="none" />
<path d="M226 1136.4 H239.3 V1142 A4.8 4.8 0 0 1 234.5 1146.8 H230.8 A4.8 4.8 0 0 1 226 1142 Z M239.3 1137.6 H241 A2.6 2.6 0 0 1 241 1142.8 H239.2" stroke="#cccccc" stroke-width="1.8" fill="none" />
<path d="M229 1129.6 C230.4 1131 227.8 1132.4 229.4 1134 M232.8 1129.6 C234.2 1131 231.6 1132.4 233.2 1134 M236.6 1129.6 C238 1131 235.4 1132.4 237 1134" stroke="#cccccc" stroke-width="1.8" fill="none" />
<path d="M1401.2 1144.4 H1416.4 L1414.2 1141 V1136 A5.4 5.4 0 0 0 1403.4 1136 V1141 Z M1406.8 1145 A2.1 2.1 0 0 0 1410.8 1145" stroke="#cccccc" stroke-width="1.8" fill="none" stroke-linejoin="round"/>
</svg>
</div>
</body></html>
